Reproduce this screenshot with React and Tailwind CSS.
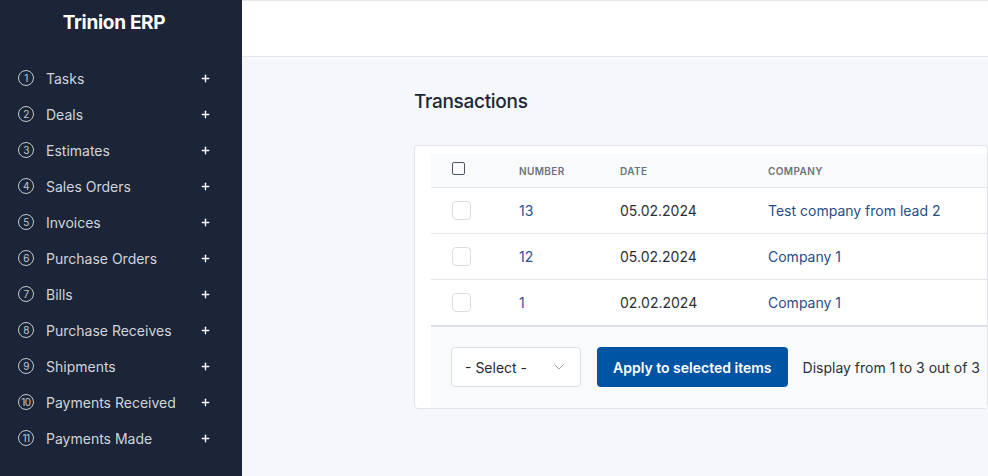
import React from 'react';
import { Plus, ChevronDown } from 'lucide-react';

const menu = [
    'Tasks',
    'Deals',
    'Estimates',
    'Sales Orders',
    'Invoices',
    'Purchase Orders',
    'Bills',
    'Purchase Receives',
    'Shipments',
    'Payments Received',
    'Payments Made',
];

const rows = [
    { number: '13', date: '05.02.2024', company: 'Test company from lead 2' },
    { number: '12', date: '05.02.2024', company: 'Company 1' },
    { number: '1', date: '02.02.2024', company: 'Company 1' },
];

const NumberIcon = ({ n }) => (
    <span className="w-[16px] h-[16px] rounded-full border border-[#c3c8d0] flex items-center justify-center text-[10px] leading-none text-[#c3c8d0] tracking-[-0.5px]">
        {n}
    </span>
);

const App = () => {
    return (
        <div className="flex h-[476px] w-[988px] overflow-hidden font-['Inter',sans-serif]">
            {/* Sidebar */}
            <aside className="w-[242px] shrink-0 bg-[#1b2537] text-[#d0d4db]">
                <div className="h-[46px] flex items-center justify-center text-white text-[19px] font-bold tracking-[-0.3px] pr-[14px]">
                    Trinion ERP
                </div>
                <nav className="mt-[14px]">
                    {menu.map((label, i) => (
                        <div key={label} className="h-[36px] flex items-center pl-[18px] pr-[31px]">
                            <NumberIcon n={i + 1} />
                            <span className="ml-[12px] text-[14px] flex-1">{label}</span>
                            <Plus size={11} strokeWidth={3} className="text-white" />
                        </div>
                    ))}
                </nav>
            </aside>

            {/* Main */}
            <main className="flex-1 bg-[#f5f7fa] flex flex-col">
                <header className="h-[57px] bg-white border-t border-b border-[#e3e6ea]" />

                <div className="pl-[172px] pt-[31px]">
                    <h1 className="text-[19px] font-medium text-[#1d2735] tracking-[-0.3px]">Transactions</h1>

                    <div className="mt-[28px] bg-white border border-[#dfe3e8] rounded-[4px] pl-[16px] pt-[8px]">
                        <table className="w-full border-collapse text-[14px]">
                            <thead>
                                <tr className="bg-[#f8fafc] h-[34px] border-b border-[#e2e5e9] text-[10px] font-semibold text-[#6b7280] tracking-[0.4px] uppercase">
                                    <th className="w-[88px] text-left pl-[21px]">
                                        <span className="block w-[13px] h-[13px] border border-[#4b5563] rounded-[2px] -mt-[3px]" />
                                    </th>
                                    <th className="w-[101px] text-left font-semibold pt-[2px]">Number</th>
                                    <th className="w-[148px] text-left font-semibold pt-[2px]">Date</th>
                                    <th className="text-left font-semibold pt-[2px]">Company</th>
                                </tr>
                            </thead>
                            <tbody>
                                {rows.map((r, i) => (
                                    <tr
                                        key={r.number}
                                        className={`h-[46px] ${i === rows.length - 1 ? 'border-b-2 border-[#dcdfe4]' : 'border-b border-[#e2e5e9]'}`}
                                    >
                                        <td className="pl-[21px]">
                                            <span className="block w-[19px] h-[19px] border border-[#d9dde2] rounded-[4px]" />
                                        </td>
                                        <td className="text-[#2a5191]">{r.number}</td>
                                        <td className="text-[#2b3038]">{r.date}</td>
                                        <td className="text-[#1f4e86]">{r.company}</td>
                                    </tr>
                                ))}
                            </tbody>
                        </table>

                        <div className="bg-[#f9fafc] h-[81px] flex items-center pl-[20px] gap-[16px]">
                            <div className="w-[130px] h-[40px] bg-white border border-[#dadee3] rounded-[4px] flex items-center justify-between pl-[13px] pr-[13px] text-[14px] text-[#222831]">
                                <span>- Select -</span>
                                <ChevronDown size={16} strokeWidth={1.5} className="text-[#9ca3af]" />
                            </div>
                            <button className="h-[40px] px-[16px] bg-[#0054a4] text-white text-[14px] font-semibold rounded-[4px]">
                                Apply to selected items
                            </button>
                            <span className="text-[14px] text-[#2b3038] -ml-[1px]">Display from 1 to 3 out of 3</span>
                        </div>
                    </div>
                </div>
            </main>
        </div>
    );
};

export default App;
